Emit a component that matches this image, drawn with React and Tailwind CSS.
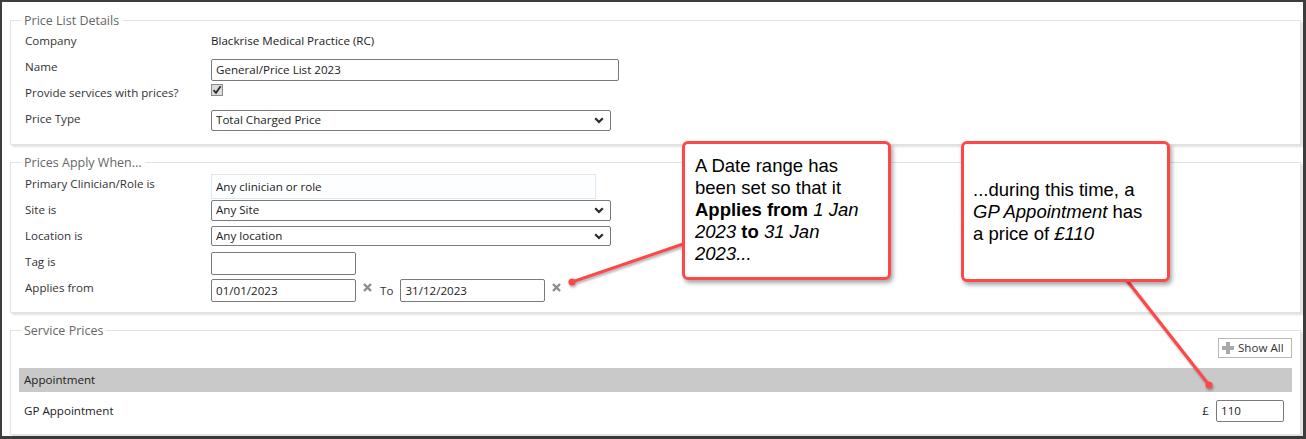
import React from "react";

const labelCls = "w-[186px] shrink-0 text-[#333]";

// bold little chevron used on the drop-downs
const Chevron = () => (
    <svg width="10" height="7" viewBox="0 0 10 7" className="shrink-0">
        <polyline points="1.2,1.2 5,5 8.8,1.2" fill="none" stroke="#2a2a2a" strokeWidth="2.2" />
    </svg>
);

const ClearX = () => (
    <svg width="9" height="9" viewBox="0 0 9 9" className="shrink-0">
        <path d="M1 1 L8 8 M8 1 L1 8" stroke="#8c8c8c" strokeWidth="2.4" />
    </svg>
);

const FakeSelect = ({ value, width, height }) => (
    <div
        className={`flex items-center justify-between border border-[#7a7a7a] rounded-[2px] pl-[4px] pr-[6px] text-[#222] bg-white ${width} ${height}`}
    >
        <span>{value}</span>
        <Chevron />
    </div>
);

const TextBox = ({ value, width, height }) => (
    <div className={`flex items-center border border-[#7a7a7a] rounded-[2px] px-[4px] text-[#222] bg-white ${width} ${height}`}>
        {value}
    </div>
);

const Row = ({ label, children }) => (
    <div className="flex items-center h-[26px]">
        <div className={labelCls}>{label}</div>
        {children}
    </div>
);

const Section = ({ title, children, className = "" }) => (
    <fieldset className="border border-[#e2e2e2] shadow-[2px_2px_2px_rgba(0,0,0,0.12)] bg-white">
        <legend className="ml-[10px] px-[3px] text-[12.5px] leading-[17px] text-[#666]">{title}</legend>
        <div className={className}>{children}</div>
    </fieldset>
);

export default function App() {
    return (
        <div className="relative w-[1306px] h-[439px] overflow-hidden bg-white font-['Open_Sans',sans-serif] text-[11.6px]">
            <div className="flex flex-col gap-[9px] w-full h-full border-t-2 border-l-2 border-r-[3px] border-b-[3px] border-[#3d3d3d] pt-[10px] pl-[8px] pr-[2px]">
                <Section title="Price List Details" className="pl-[14px] pb-[12px] -mt-[1px]">
                    <Row label="Company">
                        <span className="text-[#222]">Blackrise Medical Practice (RC)</span>
                    </Row>
                    <Row label="Name">
                        <div className="mt-[5px]">
                            <TextBox value="General/Price List 2023" width="w-[408px]" height="h-[22px]" />
                        </div>
                    </Row>
                    <Row label="Provide services with prices?">
                        <div className="mb-[6px] w-[12px] h-[12px] border border-[#8a8a8a] bg-[#dcdcdc] flex items-center justify-center">
                            <svg width="10" height="10" viewBox="0 0 10 10">
                                <path d="M1.5 5.2 L4 7.8 L8.6 1.2" fill="none" stroke="#2a2a2a" strokeWidth="1.8" />
                            </svg>
                        </div>
                    </Row>
                    <Row label="Price Type">
                        <div className="mt-[2px]">
                            <FakeSelect value="Total Charged Price" width="w-[400px]" height="h-[21px]" />
                        </div>
                    </Row>
                </Section>

                <Section title="Prices Apply When..." className="pl-[14px] pb-[11px]">
                    <Row label="Primary Clinician/Role is">
                        <div className="mt-[5px] w-[385px] h-[25px] border border-[#dfe8ef] bg-[#fdfeff] flex items-center px-[4px] text-[#222]">
                            Any clinician or role
                        </div>
                    </Row>
                    <Row label="Site is">
                        <FakeSelect value="Any Site" width="w-[400px]" height="h-[21px]" />
                    </Row>
                    <Row label="Location is">
                        <FakeSelect value="Any location" width="w-[400px]" height="h-[20px]" />
                    </Row>
                    <Row label="Tag is">
                        <div className="mt-[2px]">
                            <TextBox value="" width="w-[145px]" height="h-[23px]" />
                        </div>
                    </Row>
                    <Row label="Applies from">
                        <div className="flex items-center mt-[5px]">
                            <TextBox value="01/01/2023" width="w-[145px]" height="h-[23px]" />
                            <div className="ml-[7px] mb-[6px]">
                                <ClearX />
                            </div>
                            <span className="ml-[8px] mr-[7px] text-[#333]">To</span>
                            <TextBox value="31/12/2023" width="w-[145px]" height="h-[23px]" />
                            <div className="ml-[7px] mb-[6px]">
                                <ClearX />
                            </div>
                        </div>
                    </Row>
                </Section>

                <Section title="Service Prices" className="px-[8px] pb-[4px]">
                    <div className="flex justify-end -mt-[1px]">
                        <button className="flex items-center gap-[4px] w-[74px] h-[20px] border border-[#b8b8b8] bg-white pl-[3px] text-[#333]">
                            <svg width="12" height="12" viewBox="0 0 12 12">
                                <path d="M4 0 H8 V4 H12 V8 H8 V12 H4 V8 H0 V4 H4 Z" fill="#a9a9a9" />
                            </svg>
                            Show All
                        </button>
                    </div>
                    <div className="mt-[10px] h-[24px] bg-[#c9c9c9] flex items-center pl-[5px] text-[#222]">
                        Appointment
                    </div>
                    <div className="h-[38px] flex items-center justify-between pl-[5px] pr-[8px]">
                        <span className="text-[#222]">GP Appointment</span>
                        <div className="flex items-center gap-[7px]">
                            <span className="text-[#222]">£</span>
                            <TextBox value="110" width="w-[68px]" height="h-[22px]" />
                        </div>
                    </div>
                </Section>
            </div>

            {/* pointer lines from the notes */}
            <svg
                className="absolute inset-0 pointer-events-none drop-shadow-[1px_2px_1px_rgba(0,0,0,0.3)]"
                width="1306"
                height="439"
            >
                <line x1="572" y1="282" x2="686" y2="243" stroke="#ff4747" strokeWidth="3" />
                <circle cx="572" cy="282" r="3.6" fill="#ff4747" />
                <line x1="1125" y1="278" x2="1209" y2="385" stroke="#ff4747" strokeWidth="3" />
                <circle cx="1209" cy="385" r="3.6" fill="#ff4747" />
            </svg>

            <div className="absolute left-[682px] top-[141px] w-[209px] h-[139px] border-[3px] border-[#ff4747] rounded-[6px] bg-white shadow-[2px_3px_4px_rgba(0,0,0,0.35)] pl-[10px] pt-[11px] font-['Liberation_Sans',Arial,sans-serif] text-[18.5px] leading-[22px] text-black">
                A Date range has
                <br />
                been set so that it
                <br />
                <b>Applies from</b> <i>1 Jan</i>
                <br />
                <i>2023</i> <b>to</b> <i>31 Jan</i>
                <br />
                <i>2023...</i>
            </div>

            <div className="absolute left-[961px] top-[141px] w-[209px] h-[141px] border-[3px] border-[#ff4747] rounded-[6px] bg-white shadow-[2px_3px_4px_rgba(0,0,0,0.35)] pl-[9px] flex items-center font-['Liberation_Sans',Arial,sans-serif] text-[18.5px] leading-[22px] text-black">
                <div>
                    ...during this time, a
                    <br />
                    <i>GP Appointment</i> has
                    <br />
                    a price of <i>£110</i>
                </div>
            </div>
        </div>
    );
}
